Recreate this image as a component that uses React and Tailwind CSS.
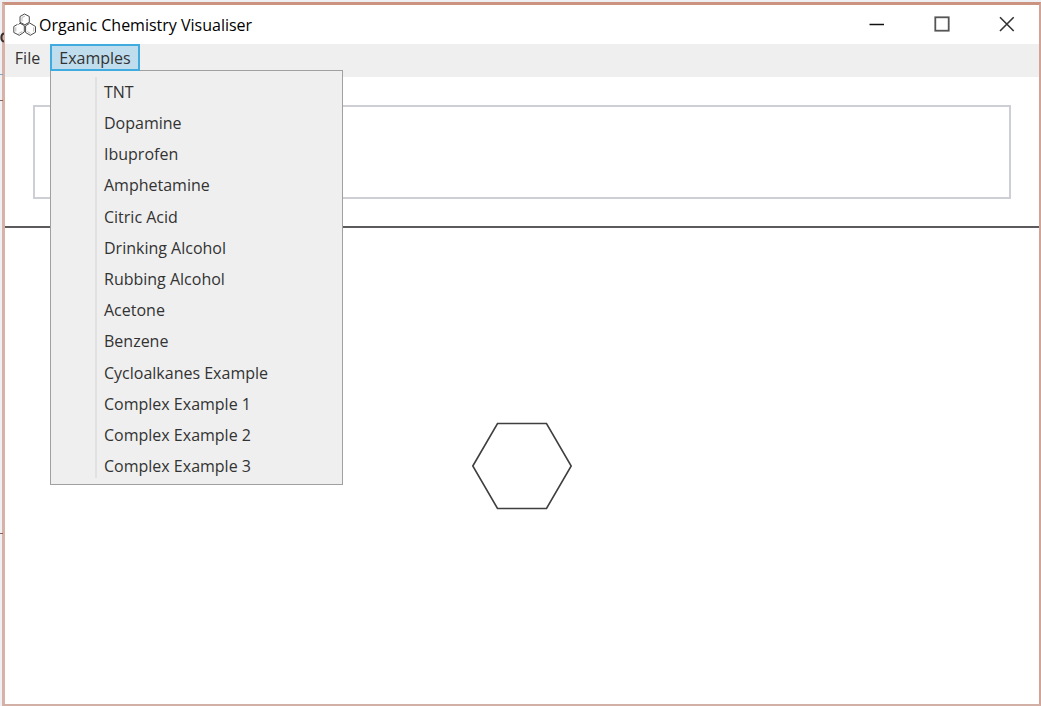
import React from "react";

const examples = [
  "TNT",
  "Dopamine",
  "Ibuprofen",
  "Amphetamine",
  "Citric Acid",
  "Drinking Alcohol",
  "Rubbing Alcohol",
  "Acetone",
  "Benzene",
  "Cycloalkanes Example",
  "Complex Example 1",
  "Complex Example 2",
  "Complex Example 3",
];

function Logo() {
  return (
    <svg className="h-6 w-6" viewBox="0 0 24 24" fill="none" stroke="#4a4a4a" aria-hidden="true">
      <path d="M11.500 1 16.300 3.500V9.300L11.800 11.800 7 9.300V3.500Z" />
      <path d="M5.500 11.500 7 10.200 11.300 12.600V19L6.300 22.300 0.800 19.500V13.500L4.500 11.300" />
      <path d="M16.300 9.800 22.500 13.500V19.300L17.300 22.300 12.600 19.500V12.800L16.300 10.500" />
      <path d="M9 8.500V4.500L12 3 M2.800 18.500V14.300 M5.500 20.500 9.300 18.600 M20.700 18.500V14.300 M14.500 18.600 17.500 20.500" stroke="#999999" strokeWidth="0.7" />
    </svg>
  );
}

function TitleBar() {
  return (
    <header className="flex h-[39px] items-center justify-between bg-white pl-2 pr-4">
      <div className="flex items-center gap-0.5 text-black">
        <Logo />
        <h1 className="text-base leading-6">Organic Chemistry Visualiser</h1>
      </div>
      <div className="-mt-0.5 flex gap-[33px]">
        <button aria-label="Minimise" className="flex h-8 w-8 items-center justify-center">
          <svg width="16" height="16" viewBox="0 0 16 16" fill="none" stroke="#111111" strokeWidth="1.5">
            <path d="M0.5 8.500H15" />
          </svg>
        </button>
        <button aria-label="Maximise" className="flex h-8 w-8 items-center justify-center">
          <svg width="16" height="16" viewBox="0 0 16 16" fill="none" stroke="#555555" strokeWidth="1.8">
            <rect x="1.3" y="1.3" width="13.4" height="13.4" />
          </svg>
        </button>
        <button aria-label="Close" className="flex h-8 w-8 items-center justify-center">
          <svg width="16" height="16" viewBox="0 0 16 16" fill="none" stroke="#333333" strokeWidth="1.6">
            <path d="M1 1.300 14.700 15 M14.700 1.300 1 15" />
          </svg>
        </button>
      </div>
    </header>
  );
}

function ExamplesMenu() {
  return (
    <div
      role="menu"
      aria-label="Examples"
      className="absolute left-0 top-[26px] z-10 w-[293px] border border-[#a0a0a0] bg-[#efefef] pb-0.5 pt-[5px]"
    >
      <span aria-hidden="true" className="absolute bottom-1.5 left-11 top-1.5 w-0.5 bg-[#e1e1e1]" />
      <div className="flex h-[406px] flex-col">
        {examples.map((name) => (
          <button key={name} role="menuitem" className="flex flex-1 items-center pl-[53px] text-left hover:bg-[#c0ddee]">
            {name}
          </button>
        ))}
      </div>
    </div>
  );
}

function MenuBar() {
  return (
    <nav className="flex h-[33px] items-start bg-[#efefef] text-base leading-6 text-[#333333]">
      <button className="flex h-[27px] w-[45px] items-center justify-center">File</button>
      <div className="relative">
        <button
          aria-haspopup="menu"
          aria-expanded="true"
          className="relative z-20 flex h-[27px] w-[90px] items-center justify-center border-2 border-[#3fabdf] bg-[#c0ddee]"
        >
          Examples
        </button>
        <ExamplesMenu />
      </div>
    </nav>
  );
}

function BackdropEdge() {
  return (
    <svg className="absolute left-0 top-0 h-[560px] w-1" viewBox="0 0 4 560" fill="none" aria-hidden="true">
      <path d="M4 33.500C0.500 34 0.500 41 4 41.500" stroke="#3b302e" strokeWidth="2" />
      <path d="M0 74.500H3" stroke="#7fa3c0" />
      <path d="M0 100.500H3 M0 533.500H3" stroke="#8a6258" />
    </svg>
  );
}

export default function App() {
  return (
    <div className="relative flex min-h-screen bg-[#eef0f3] pl-0.5 pt-0.5 font-['Open_Sans','Noto_Sans',sans-serif]">
      <div className="flex flex-1 flex-col border-b-2 border-l-[3px] border-r-2 border-t-[3px] border-b-[#d3b0a6] border-l-[#d8b2a6] border-r-[#d0a598] border-t-[#cc9280] bg-white">
        <TitleBar />
        <MenuBar />
        <section className="flex border-b-2 border-[#5c5a5d] px-7 pb-[27px] pt-7">
          <textarea
            aria-label="Molecule name"
            className="h-[94px] flex-1 resize-none border-2 border-[#cecfd4] bg-white p-2 text-base outline-none"
          />
        </section>
        <main className="flex flex-1 items-center justify-center">
          <svg width="102" height="90" viewBox="0 0 102 90" fill="none" stroke="#3f3f3f" strokeWidth="1.6" role="img" aria-label="Cyclohexane ring">
            <path d="M1.800 45 26.500 2.500H75.500L100.200 45 75.500 87.500H26.500Z" />
          </svg>
        </main>
      </div>
      <BackdropEdge />
    </div>
  );
}
